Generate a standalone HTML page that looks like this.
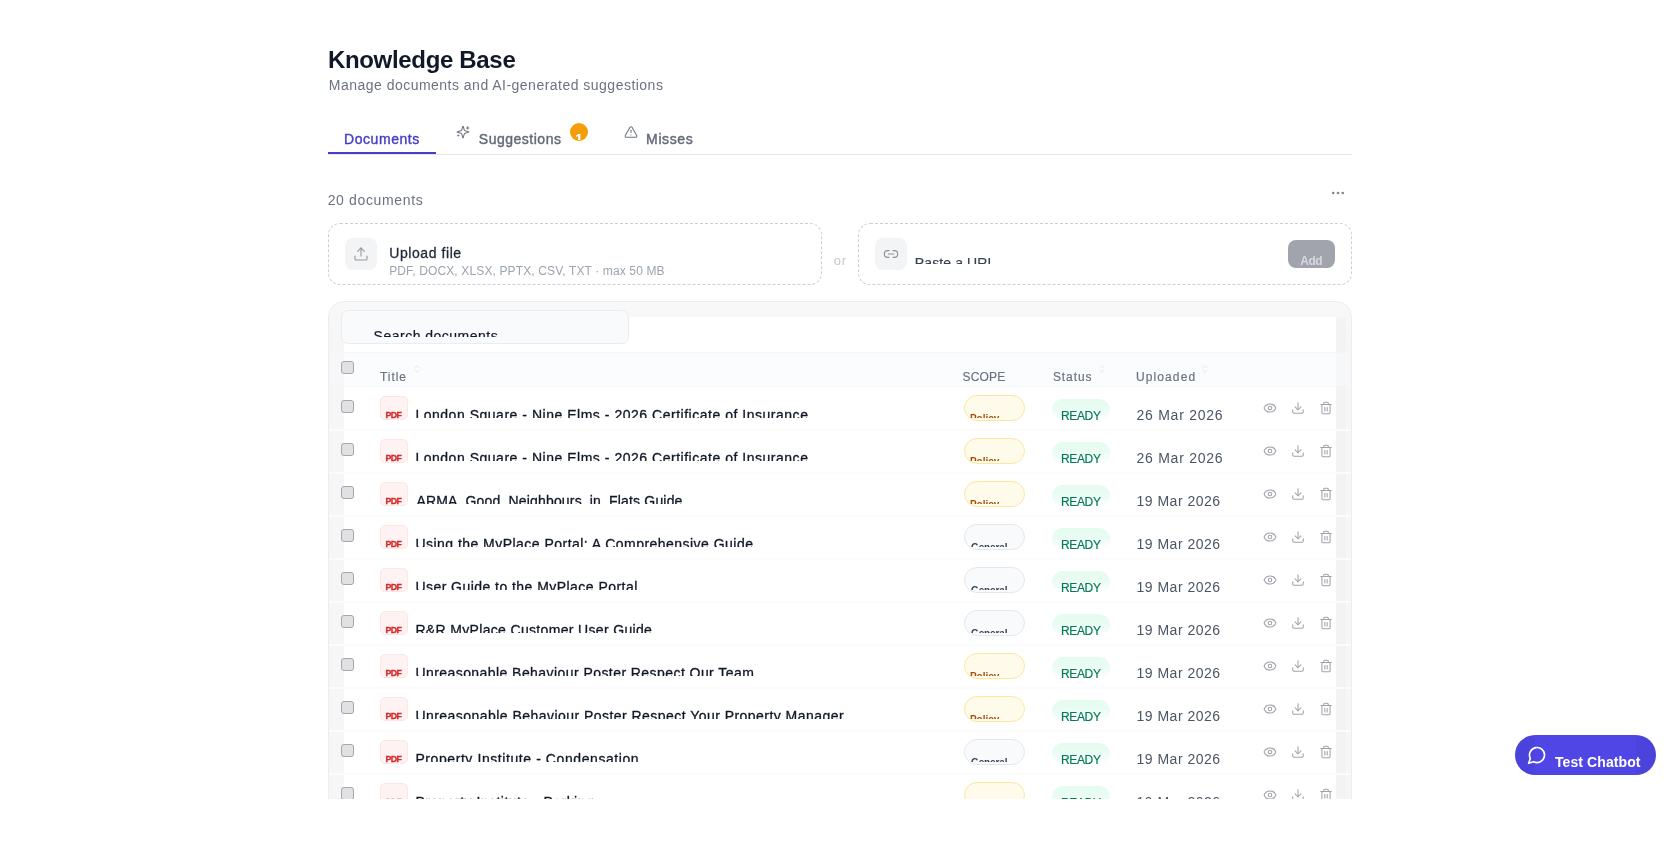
<!DOCTYPE html><html lang="en"><head><meta charset="utf-8"><title>Knowledge Base</title><style>
*{box-sizing:border-box;margin:0;padding:0}
html,body{width:1680px;height:855px;overflow:hidden;background:#fff}
body{font-family:"Liberation Sans",sans-serif;color:#111827;position:relative}
.a{position:absolute;white-space:nowrap}
.t{position:absolute;white-space:nowrap;line-height:1}
#page{position:absolute;left:0;top:0;width:1680px;height:799px;overflow:hidden;transform:translateZ(0)}
#fab{position:absolute;left:0;top:0;width:1680px;height:855px;transform:translateZ(0)}
svg{position:absolute;overflow:visible}
.ic{fill:none;stroke-linecap:round;stroke-linejoin:round}
.card{left:328px;top:301px;width:1024px;height:600px;background:linear-gradient(#f9f9fa 0,#f7f7f8 14px,#f6f6f7 40px);border:1px solid #ededef;border-radius:16px}
.inner{left:344px;top:317px;width:992px;height:600px;background:#fff}
.hdr{left:344px;top:352px;width:992px;height:34.5px;background:rgba(251,252,253,.996);border-top:1px solid #f4f5f7;border-bottom:1px solid #f5f6f8}
.sep{left:329px;width:1022px;height:2px;background:#fcfcfd}
.cb{width:13px;height:13px;border:1px solid #a6a6ab;background:#e1e1e3;border-radius:3px}
.pdf{left:380px;width:28px;height:23.5px;background:#fef2f2;border:1px solid #fde6e6;border-radius:5px;overflow:hidden}
.clip{overflow:hidden}
.pill{left:963.8px;width:61.7px;height:26px;border-radius:13px;overflow:hidden}
.pol{background:#fffbeb;border:1px solid #fbe7a1}
.gen{background:#f9fafb;border:1px solid #e5e7eb}
.rdy{left:1052px;width:58px;height:22px;border-radius:11px;background:linear-gradient(#e5fbf0 0,#e9fcf3 45%,#f5fef9 78%,#fff 100%)}
</style></head><body><div id="page">
<div class="t" style="left:327.90px;top:47.68px;font-size:24px;color:#111827;letter-spacing:-0.323px;font-weight:700">Knowledge Base</div>
<div class="t" style="left:328.80px;top:77.85px;font-size:14px;color:#6b7280;letter-spacing:0.482px">Manage documents and AI-generated suggestions</div>
<div class="a" style="left:328px;top:154px;width:1024px;height:1px;background:#e5e7eb"></div>
<div class="a" style="left:328px;top:152px;width:108px;height:2px;background:#463ec8"></div>
<div class="t" style="left:344.00px;top:131.95px;font-size:14px;color:#4740c6;letter-spacing:0.562px;-webkit-text-stroke:0.4px #4740c6">Documents</div>
<svg class="ic" style="left:456px;top:125px" width="14" height="14" viewBox="0 0 24 24" stroke="#6f7480" stroke-width="1.8"><path d="M9.94 15.5A2 2 0 0 0 8.5 14.06l-6.14-1.58a.5.5 0 0 1 0-.96L8.5 9.94A2 2 0 0 0 9.94 8.5l1.58-6.14a.5.5 0 0 1 .96 0L14.06 8.5A2 2 0 0 0 15.5 9.94l6.14 1.58a.5.5 0 0 1 0 .96L15.5 14.06a2 2 0 0 0-1.44 1.44l-1.58 6.14a.5.5 0 0 1-.96 0z"/><path d="M20 3v4"/><path d="M22 5h-4"/><path d="M4 17v2"/><path d="M5 18H3"/></svg>
<div class="t" style="left:478.80px;top:132.15px;font-size:14px;color:#646976;letter-spacing:0.510px;-webkit-text-stroke:0.42px #646976">Suggestions</div>
<div class="a" style="left:569.8px;top:123px;width:17.8px;height:17.6px;border-radius:9px;background:#f59e0b"></div><div class="a clip" style="left:570px;top:123px;width:18px;height:16.8px"><div class="t" style="left:5.20px;top:9.40px;font-size:13px;color:#fff;letter-spacing:0.000px;font-weight:700;-webkit-text-stroke:0.2px #fff">1</div></div>
<svg class="ic" style="left:623.6px;top:125px" width="14" height="14" viewBox="0 0 24 24" stroke="#6f7480" stroke-width="1.8"><path d="M21.73 18l-8-14a2 2 0 0 0-3.48 0l-8 14A2 2 0 0 0 4 21h16a2 2 0 0 0 1.73-3"/><path d="M12 9v4"/><path d="M12 17h.01"/></svg>
<div class="t" style="left:646.10px;top:132.15px;font-size:14px;color:#646976;letter-spacing:0.620px;-webkit-text-stroke:0.42px #646976">Misses</div>
<div class="t" style="left:327.70px;top:192.55px;font-size:14px;color:#6b7280;letter-spacing:0.645px">20 documents</div>
<svg style="left:1328px;top:188px" width="20" height="10" viewBox="0 0 20 10"><circle cx="5.2" cy="5" r="1.3" fill="#85858d"/><circle cx="10" cy="5" r="1.3" fill="#85858d"/><circle cx="14.75" cy="5" r="1.3" fill="#85858d"/></svg>
<div class="a" style="left:328px;top:223px;width:494px;height:62px;border:1px dashed #cdced3;border-radius:12px"></div>
<div class="a" style="left:345px;top:238px;width:32px;height:32px;border-radius:8px;background:#f3f4f6"></div>
<svg class="ic" style="left:353px;top:246px" width="16" height="16" viewBox="0 0 24 24" stroke="#9a9ba4" stroke-width="1.7"><path d="M21 15v4a2 2 0 0 1-2 2H5a2 2 0 0 1-2-2v-4"/><path d="M17 8l-5-5-5 5"/><path d="M12 3v12"/></svg>
<div class="t" style="left:389.20px;top:246.15px;font-size:14px;color:#1f2937;letter-spacing:0.580px;-webkit-text-stroke:0.3px #1f2937">Upload file</div>
<div class="t" style="left:389.20px;top:264.54px;font-size:12px;color:#9ca3af;letter-spacing:0.131px">PDF, DOCX, XLSX, PPTX, CSV, TXT · max 50 MB</div>
<div class="t" style="left:833.80px;top:254.00px;font-size:13px;color:#c6c8cd;letter-spacing:0.800px">or</div>
<div class="a" style="left:858px;top:223px;width:494px;height:62px;border:1px dashed #cdced3;border-radius:12px"></div>
<div class="a" style="left:875px;top:238px;width:32px;height:32px;border-radius:8px;background:#f3f4f6"></div>
<svg class="ic" style="left:883px;top:246px" width="16" height="16" viewBox="0 0 24 24" stroke="#8f9199" stroke-width="1.7"><path d="M9 17H7A5 5 0 0 1 7 7h2"/><path d="M15 7h2a5 5 0 1 1 0 10h-2"/><path d="M8 12h8"/></svg>
<div class="a clip" style="left:910px;top:250px;width:300px;height:14px"><div class="t" style="left:4.80px;top:5.85px;font-size:14px;color:#374151;letter-spacing:0.120px;-webkit-text-stroke:0.2px #374151">Paste a URL...</div></div>
<div class="a" style="left:1288px;top:240px;width:46.5px;height:28px;border-radius:8px;background:#a1a4ad"></div>
<div class="t" style="left:1300.20px;top:254.84px;font-size:12px;color:#d6d8de;letter-spacing:-0.450px;font-weight:700">Add</div>
<div class="a card"></div><div class="a" style="left:1336px;top:317px;width:10px;height:500px;background:#f3f3f4"></div><div class="a inner"></div>
<div class="a" style="left:341px;top:310px;width:288px;height:33.5px;border:1px solid #ebecef;border-radius:7px;background:#f9fafb"></div>
<div class="a clip" style="left:370px;top:320px;width:200px;height:17px"><div class="t" style="left:3.60px;top:8.95px;font-size:14px;color:#111827;letter-spacing:0.493px;-webkit-text-stroke:0.2px #111827">Search documents...</div></div>
<div class="a" style="left:329px;top:352.5px;width:1022px;height:33.5px;background:#f7f7f9"></div><div class="a hdr"></div>
<div class="a cb" style="left:341px;top:361px"></div>
<div class="t" style="left:380.00px;top:370.64px;font-size:12px;color:#6b7280;letter-spacing:0.950px;-webkit-text-stroke:0.18px #6b7280">Title</div>
<svg class="ic" style="left:411.5px;top:364px" width="10" height="10" viewBox="0 0 24 24" stroke="#e3e5e9" stroke-width="2.4"><path d="M7 15l5 5 5-5M7 9l5-5 5 5"/></svg>
<div class="t" style="left:962.50px;top:370.64px;font-size:12px;color:#6b7280;letter-spacing:0.200px;-webkit-text-stroke:0.18px #6b7280">SCOPE</div>
<div class="t" style="left:1052.90px;top:370.64px;font-size:12px;color:#6b7280;letter-spacing:0.920px;-webkit-text-stroke:0.18px #6b7280">Status</div>
<svg class="ic" style="left:1096.5px;top:364px" width="10" height="10" viewBox="0 0 24 24" stroke="#e3e5e9" stroke-width="2.4"><path d="M7 15l5 5 5-5M7 9l5-5 5 5"/></svg>
<div class="t" style="left:1136.00px;top:370.64px;font-size:12px;color:#6b7280;letter-spacing:1.100px;-webkit-text-stroke:0.18px #6b7280">Uploaded</div>
<svg class="ic" style="left:1199.5px;top:364px" width="10" height="10" viewBox="0 0 24 24" stroke="#e3e5e9" stroke-width="2.4"><path d="M7 15l5 5 5-5M7 9l5-5 5 5"/></svg>
<div class="a cb" style="left:341px;top:400.0px"></div>
<div class="a pdf" style="top:396.0px"><div class="t" style="left:4.40px;top:13.55px;font-size:8.8px;color:#d42a2a;letter-spacing:-0.500px;font-weight:700;-webkit-text-stroke:0.3px #d42a2a">PDF</div></div>
<div class="a clip" style="left:412px;top:401.5px;width:520px;height:16.4px"><div class="t" style="left:3.40px;top:6.25px;font-size:14px;color:#111827;letter-spacing:0.520px;-webkit-text-stroke:0.3px #111827">London Square - Nine Elms - 2026 Certificate of Insurance</div></div>
<div class="a pill pol" style="top:394.8px"><div class="a clip" style="left:0;top:0;width:60px;height:22.3px"><div class="t" style="left:5.20px;top:17.84px;font-size:10px;color:#a34e0c;letter-spacing:-0.040px;font-weight:700">Policy</div></div></div>
<div class="a rdy" style="top:399.0px"></div>
<div class="t" style="left:1061.00px;top:409.64px;font-size:12px;color:#047857;letter-spacing:-0.350px;-webkit-text-stroke:0.15px #047857">READY</div>
<div class="t" style="left:1136.50px;top:408.15px;font-size:14px;color:#4b5563;letter-spacing:0.750px">26 Mar 2026</div>
<svg class="ic" style="left:1263px;top:401.0px" width="14" height="14" viewBox="0 0 24 24" stroke="#a1a1aa" stroke-width="1.8"><path d="M2.06 12.35a1 1 0 0 1 0-.7 10.75 10.75 0 0 1 19.88 0 1 1 0 0 1 0 .7 10.75 10.75 0 0 1-19.88 0"/><circle cx="12" cy="12" r="3"/></svg>
<svg class="ic" style="left:1291px;top:401.0px" width="14" height="14" viewBox="0 0 24 24" stroke="#a1a1aa" stroke-width="1.8"><path d="M21 15v4a2 2 0 0 1-2 2H5a2 2 0 0 1-2-2v-4"/><path d="M7 10l5 5 5-5"/><path d="M12 15V3"/></svg>
<svg class="ic" style="left:1319px;top:401.0px" width="14" height="14" viewBox="0 0 24 24" stroke="#a1a1aa" stroke-width="1.8"><path d="M3 6h18"/><path d="M19 6v14a2 2 0 0 1-2 2H7a2 2 0 0 1-2-2V6"/><path d="M8 6V4a2 2 0 0 1 2-2h4a2 2 0 0 1 2 2v2"/><path d="M10 11v6"/><path d="M14 11v6"/></svg>
<div class="a sep" style="top:429.0px"></div>
<div class="a cb" style="left:341px;top:443.0px"></div>
<div class="a pdf" style="top:439.0px"><div class="t" style="left:4.40px;top:13.55px;font-size:8.8px;color:#d42a2a;letter-spacing:-0.500px;font-weight:700;-webkit-text-stroke:0.3px #d42a2a">PDF</div></div>
<div class="a clip" style="left:412px;top:444.5px;width:520px;height:16.4px"><div class="t" style="left:3.40px;top:6.25px;font-size:14px;color:#111827;letter-spacing:0.520px;-webkit-text-stroke:0.3px #111827">London Square - Nine Elms - 2026 Certificate of Insurance</div></div>
<div class="a pill pol" style="top:437.8px"><div class="a clip" style="left:0;top:0;width:60px;height:22.3px"><div class="t" style="left:5.20px;top:17.84px;font-size:10px;color:#a34e0c;letter-spacing:-0.040px;font-weight:700">Policy</div></div></div>
<div class="a rdy" style="top:442.0px"></div>
<div class="t" style="left:1061.00px;top:452.64px;font-size:12px;color:#047857;letter-spacing:-0.350px;-webkit-text-stroke:0.15px #047857">READY</div>
<div class="t" style="left:1136.50px;top:451.15px;font-size:14px;color:#4b5563;letter-spacing:0.750px">26 Mar 2026</div>
<svg class="ic" style="left:1263px;top:444.0px" width="14" height="14" viewBox="0 0 24 24" stroke="#a1a1aa" stroke-width="1.8"><path d="M2.06 12.35a1 1 0 0 1 0-.7 10.75 10.75 0 0 1 19.88 0 1 1 0 0 1 0 .7 10.75 10.75 0 0 1-19.88 0"/><circle cx="12" cy="12" r="3"/></svg>
<svg class="ic" style="left:1291px;top:444.0px" width="14" height="14" viewBox="0 0 24 24" stroke="#a1a1aa" stroke-width="1.8"><path d="M21 15v4a2 2 0 0 1-2 2H5a2 2 0 0 1-2-2v-4"/><path d="M7 10l5 5 5-5"/><path d="M12 15V3"/></svg>
<svg class="ic" style="left:1319px;top:444.0px" width="14" height="14" viewBox="0 0 24 24" stroke="#a1a1aa" stroke-width="1.8"><path d="M3 6h18"/><path d="M19 6v14a2 2 0 0 1-2 2H7a2 2 0 0 1-2-2V6"/><path d="M8 6V4a2 2 0 0 1 2-2h4a2 2 0 0 1 2 2v2"/><path d="M10 11v6"/><path d="M14 11v6"/></svg>
<div class="a sep" style="top:472.0px"></div>
<div class="a cb" style="left:341px;top:486.0px"></div>
<div class="a pdf" style="top:482.0px"><div class="t" style="left:4.40px;top:13.55px;font-size:8.8px;color:#d42a2a;letter-spacing:-0.500px;font-weight:700;-webkit-text-stroke:0.3px #d42a2a">PDF</div></div>
<div class="a clip" style="left:412px;top:487.5px;width:520px;height:16.4px"><div class="t" style="left:4.40px;top:6.25px;font-size:14px;color:#111827;letter-spacing:0.179px;-webkit-text-stroke:0.3px #111827">ARMA_Good_Neighbours_in_Flats Guide</div></div>
<div class="a pill pol" style="top:480.8px"><div class="a clip" style="left:0;top:0;width:60px;height:22.3px"><div class="t" style="left:5.20px;top:17.84px;font-size:10px;color:#a34e0c;letter-spacing:-0.040px;font-weight:700">Policy</div></div></div>
<div class="a rdy" style="top:485.0px"></div>
<div class="t" style="left:1061.00px;top:495.64px;font-size:12px;color:#047857;letter-spacing:-0.350px;-webkit-text-stroke:0.15px #047857">READY</div>
<div class="t" style="left:1136.50px;top:494.15px;font-size:14px;color:#4b5563;letter-spacing:0.500px">19 Mar 2026</div>
<svg class="ic" style="left:1263px;top:487.0px" width="14" height="14" viewBox="0 0 24 24" stroke="#a1a1aa" stroke-width="1.8"><path d="M2.06 12.35a1 1 0 0 1 0-.7 10.75 10.75 0 0 1 19.88 0 1 1 0 0 1 0 .7 10.75 10.75 0 0 1-19.88 0"/><circle cx="12" cy="12" r="3"/></svg>
<svg class="ic" style="left:1291px;top:487.0px" width="14" height="14" viewBox="0 0 24 24" stroke="#a1a1aa" stroke-width="1.8"><path d="M21 15v4a2 2 0 0 1-2 2H5a2 2 0 0 1-2-2v-4"/><path d="M7 10l5 5 5-5"/><path d="M12 15V3"/></svg>
<svg class="ic" style="left:1319px;top:487.0px" width="14" height="14" viewBox="0 0 24 24" stroke="#a1a1aa" stroke-width="1.8"><path d="M3 6h18"/><path d="M19 6v14a2 2 0 0 1-2 2H7a2 2 0 0 1-2-2V6"/><path d="M8 6V4a2 2 0 0 1 2-2h4a2 2 0 0 1 2 2v2"/><path d="M10 11v6"/><path d="M14 11v6"/></svg>
<div class="a sep" style="top:515.0px"></div>
<div class="a cb" style="left:341px;top:529.0px"></div>
<div class="a pdf" style="top:525.0px"><div class="t" style="left:4.40px;top:13.55px;font-size:8.8px;color:#d42a2a;letter-spacing:-0.500px;font-weight:700;-webkit-text-stroke:0.3px #d42a2a">PDF</div></div>
<div class="a clip" style="left:412px;top:530.5px;width:520px;height:16.4px"><div class="t" style="left:3.40px;top:6.25px;font-size:14px;color:#111827;letter-spacing:0.470px;-webkit-text-stroke:0.3px #111827">Using the MyPlace Portal: A Comprehensive Guide</div></div>
<div class="a pill gen" style="top:523.8px"><div class="a clip" style="left:0;top:0;width:60px;height:22.3px"><div class="t" style="left:6.20px;top:17.84px;font-size:10px;color:#374151;letter-spacing:-0.117px;font-weight:700">General</div></div></div>
<div class="a rdy" style="top:528.0px"></div>
<div class="t" style="left:1061.00px;top:538.64px;font-size:12px;color:#047857;letter-spacing:-0.350px;-webkit-text-stroke:0.15px #047857">READY</div>
<div class="t" style="left:1136.50px;top:537.15px;font-size:14px;color:#4b5563;letter-spacing:0.500px">19 Mar 2026</div>
<svg class="ic" style="left:1263px;top:530.0px" width="14" height="14" viewBox="0 0 24 24" stroke="#a1a1aa" stroke-width="1.8"><path d="M2.06 12.35a1 1 0 0 1 0-.7 10.75 10.75 0 0 1 19.88 0 1 1 0 0 1 0 .7 10.75 10.75 0 0 1-19.88 0"/><circle cx="12" cy="12" r="3"/></svg>
<svg class="ic" style="left:1291px;top:530.0px" width="14" height="14" viewBox="0 0 24 24" stroke="#a1a1aa" stroke-width="1.8"><path d="M21 15v4a2 2 0 0 1-2 2H5a2 2 0 0 1-2-2v-4"/><path d="M7 10l5 5 5-5"/><path d="M12 15V3"/></svg>
<svg class="ic" style="left:1319px;top:530.0px" width="14" height="14" viewBox="0 0 24 24" stroke="#a1a1aa" stroke-width="1.8"><path d="M3 6h18"/><path d="M19 6v14a2 2 0 0 1-2 2H7a2 2 0 0 1-2-2V6"/><path d="M8 6V4a2 2 0 0 1 2-2h4a2 2 0 0 1 2 2v2"/><path d="M10 11v6"/><path d="M14 11v6"/></svg>
<div class="a sep" style="top:558.0px"></div>
<div class="a cb" style="left:341px;top:572.0px"></div>
<div class="a pdf" style="top:568.0px"><div class="t" style="left:4.40px;top:13.55px;font-size:8.8px;color:#d42a2a;letter-spacing:-0.500px;font-weight:700;-webkit-text-stroke:0.3px #d42a2a">PDF</div></div>
<div class="a clip" style="left:412px;top:573.5px;width:520px;height:16.4px"><div class="t" style="left:3.40px;top:6.25px;font-size:14px;color:#111827;letter-spacing:0.455px;-webkit-text-stroke:0.3px #111827">User Guide to the MyPlace Portal</div></div>
<div class="a pill gen" style="top:566.8px"><div class="a clip" style="left:0;top:0;width:60px;height:22.3px"><div class="t" style="left:6.20px;top:17.84px;font-size:10px;color:#374151;letter-spacing:-0.117px;font-weight:700">General</div></div></div>
<div class="a rdy" style="top:571.0px"></div>
<div class="t" style="left:1061.00px;top:581.64px;font-size:12px;color:#047857;letter-spacing:-0.350px;-webkit-text-stroke:0.15px #047857">READY</div>
<div class="t" style="left:1136.50px;top:580.15px;font-size:14px;color:#4b5563;letter-spacing:0.500px">19 Mar 2026</div>
<svg class="ic" style="left:1263px;top:573.0px" width="14" height="14" viewBox="0 0 24 24" stroke="#a1a1aa" stroke-width="1.8"><path d="M2.06 12.35a1 1 0 0 1 0-.7 10.75 10.75 0 0 1 19.88 0 1 1 0 0 1 0 .7 10.75 10.75 0 0 1-19.88 0"/><circle cx="12" cy="12" r="3"/></svg>
<svg class="ic" style="left:1291px;top:573.0px" width="14" height="14" viewBox="0 0 24 24" stroke="#a1a1aa" stroke-width="1.8"><path d="M21 15v4a2 2 0 0 1-2 2H5a2 2 0 0 1-2-2v-4"/><path d="M7 10l5 5 5-5"/><path d="M12 15V3"/></svg>
<svg class="ic" style="left:1319px;top:573.0px" width="14" height="14" viewBox="0 0 24 24" stroke="#a1a1aa" stroke-width="1.8"><path d="M3 6h18"/><path d="M19 6v14a2 2 0 0 1-2 2H7a2 2 0 0 1-2-2V6"/><path d="M8 6V4a2 2 0 0 1 2-2h4a2 2 0 0 1 2 2v2"/><path d="M10 11v6"/><path d="M14 11v6"/></svg>
<div class="a sep" style="top:601.0px"></div>
<div class="a cb" style="left:341px;top:615.0px"></div>
<div class="a pdf" style="top:611.0px"><div class="t" style="left:4.40px;top:13.55px;font-size:8.8px;color:#d42a2a;letter-spacing:-0.500px;font-weight:700;-webkit-text-stroke:0.3px #d42a2a">PDF</div></div>
<div class="a clip" style="left:412px;top:616.5px;width:520px;height:16.4px"><div class="t" style="left:3.40px;top:6.25px;font-size:14px;color:#111827;letter-spacing:0.337px;-webkit-text-stroke:0.3px #111827">R&amp;R MyPlace Customer User Guide</div></div>
<div class="a pill gen" style="top:609.8px"><div class="a clip" style="left:0;top:0;width:60px;height:22.3px"><div class="t" style="left:6.20px;top:17.84px;font-size:10px;color:#374151;letter-spacing:-0.117px;font-weight:700">General</div></div></div>
<div class="a rdy" style="top:614.0px"></div>
<div class="t" style="left:1061.00px;top:624.64px;font-size:12px;color:#047857;letter-spacing:-0.350px;-webkit-text-stroke:0.15px #047857">READY</div>
<div class="t" style="left:1136.50px;top:623.15px;font-size:14px;color:#4b5563;letter-spacing:0.500px">19 Mar 2026</div>
<svg class="ic" style="left:1263px;top:616.0px" width="14" height="14" viewBox="0 0 24 24" stroke="#a1a1aa" stroke-width="1.8"><path d="M2.06 12.35a1 1 0 0 1 0-.7 10.75 10.75 0 0 1 19.88 0 1 1 0 0 1 0 .7 10.75 10.75 0 0 1-19.88 0"/><circle cx="12" cy="12" r="3"/></svg>
<svg class="ic" style="left:1291px;top:616.0px" width="14" height="14" viewBox="0 0 24 24" stroke="#a1a1aa" stroke-width="1.8"><path d="M21 15v4a2 2 0 0 1-2 2H5a2 2 0 0 1-2-2v-4"/><path d="M7 10l5 5 5-5"/><path d="M12 15V3"/></svg>
<svg class="ic" style="left:1319px;top:616.0px" width="14" height="14" viewBox="0 0 24 24" stroke="#a1a1aa" stroke-width="1.8"><path d="M3 6h18"/><path d="M19 6v14a2 2 0 0 1-2 2H7a2 2 0 0 1-2-2V6"/><path d="M8 6V4a2 2 0 0 1 2-2h4a2 2 0 0 1 2 2v2"/><path d="M10 11v6"/><path d="M14 11v6"/></svg>
<div class="a sep" style="top:644.0px"></div>
<div class="a cb" style="left:341px;top:658.0px"></div>
<div class="a pdf" style="top:654.0px"><div class="t" style="left:4.40px;top:13.55px;font-size:8.8px;color:#d42a2a;letter-spacing:-0.500px;font-weight:700;-webkit-text-stroke:0.3px #d42a2a">PDF</div></div>
<div class="a clip" style="left:412px;top:659.5px;width:520px;height:16.4px"><div class="t" style="left:3.40px;top:6.25px;font-size:14px;color:#111827;letter-spacing:0.436px;-webkit-text-stroke:0.3px #111827">Unreasonable Behaviour Poster Respect Our Team</div></div>
<div class="a pill pol" style="top:652.8px"><div class="a clip" style="left:0;top:0;width:60px;height:22.3px"><div class="t" style="left:5.20px;top:17.84px;font-size:10px;color:#a34e0c;letter-spacing:-0.040px;font-weight:700">Policy</div></div></div>
<div class="a rdy" style="top:657.0px"></div>
<div class="t" style="left:1061.00px;top:667.64px;font-size:12px;color:#047857;letter-spacing:-0.350px;-webkit-text-stroke:0.15px #047857">READY</div>
<div class="t" style="left:1136.50px;top:666.15px;font-size:14px;color:#4b5563;letter-spacing:0.500px">19 Mar 2026</div>
<svg class="ic" style="left:1263px;top:659.0px" width="14" height="14" viewBox="0 0 24 24" stroke="#a1a1aa" stroke-width="1.8"><path d="M2.06 12.35a1 1 0 0 1 0-.7 10.75 10.75 0 0 1 19.88 0 1 1 0 0 1 0 .7 10.75 10.75 0 0 1-19.88 0"/><circle cx="12" cy="12" r="3"/></svg>
<svg class="ic" style="left:1291px;top:659.0px" width="14" height="14" viewBox="0 0 24 24" stroke="#a1a1aa" stroke-width="1.8"><path d="M21 15v4a2 2 0 0 1-2 2H5a2 2 0 0 1-2-2v-4"/><path d="M7 10l5 5 5-5"/><path d="M12 15V3"/></svg>
<svg class="ic" style="left:1319px;top:659.0px" width="14" height="14" viewBox="0 0 24 24" stroke="#a1a1aa" stroke-width="1.8"><path d="M3 6h18"/><path d="M19 6v14a2 2 0 0 1-2 2H7a2 2 0 0 1-2-2V6"/><path d="M8 6V4a2 2 0 0 1 2-2h4a2 2 0 0 1 2 2v2"/><path d="M10 11v6"/><path d="M14 11v6"/></svg>
<div class="a sep" style="top:687.0px"></div>
<div class="a cb" style="left:341px;top:701.0px"></div>
<div class="a pdf" style="top:697.0px"><div class="t" style="left:4.40px;top:13.55px;font-size:8.8px;color:#d42a2a;letter-spacing:-0.500px;font-weight:700;-webkit-text-stroke:0.3px #d42a2a">PDF</div></div>
<div class="a clip" style="left:412px;top:702.5px;width:520px;height:16.4px"><div class="t" style="left:3.40px;top:6.25px;font-size:14px;color:#111827;letter-spacing:0.459px;-webkit-text-stroke:0.3px #111827">Unreasonable Behaviour Poster Respect Your Property Manager</div></div>
<div class="a pill pol" style="top:695.8px"><div class="a clip" style="left:0;top:0;width:60px;height:22.3px"><div class="t" style="left:5.20px;top:17.84px;font-size:10px;color:#a34e0c;letter-spacing:-0.040px;font-weight:700">Policy</div></div></div>
<div class="a rdy" style="top:700.0px"></div>
<div class="t" style="left:1061.00px;top:710.64px;font-size:12px;color:#047857;letter-spacing:-0.350px;-webkit-text-stroke:0.15px #047857">READY</div>
<div class="t" style="left:1136.50px;top:709.15px;font-size:14px;color:#4b5563;letter-spacing:0.500px">19 Mar 2026</div>
<svg class="ic" style="left:1263px;top:702.0px" width="14" height="14" viewBox="0 0 24 24" stroke="#a1a1aa" stroke-width="1.8"><path d="M2.06 12.35a1 1 0 0 1 0-.7 10.75 10.75 0 0 1 19.88 0 1 1 0 0 1 0 .7 10.75 10.75 0 0 1-19.88 0"/><circle cx="12" cy="12" r="3"/></svg>
<svg class="ic" style="left:1291px;top:702.0px" width="14" height="14" viewBox="0 0 24 24" stroke="#a1a1aa" stroke-width="1.8"><path d="M21 15v4a2 2 0 0 1-2 2H5a2 2 0 0 1-2-2v-4"/><path d="M7 10l5 5 5-5"/><path d="M12 15V3"/></svg>
<svg class="ic" style="left:1319px;top:702.0px" width="14" height="14" viewBox="0 0 24 24" stroke="#a1a1aa" stroke-width="1.8"><path d="M3 6h18"/><path d="M19 6v14a2 2 0 0 1-2 2H7a2 2 0 0 1-2-2V6"/><path d="M8 6V4a2 2 0 0 1 2-2h4a2 2 0 0 1 2 2v2"/><path d="M10 11v6"/><path d="M14 11v6"/></svg>
<div class="a sep" style="top:730.0px"></div>
<div class="a cb" style="left:341px;top:744.0px"></div>
<div class="a pdf" style="top:740.0px"><div class="t" style="left:4.40px;top:13.55px;font-size:8.8px;color:#d42a2a;letter-spacing:-0.500px;font-weight:700;-webkit-text-stroke:0.3px #d42a2a">PDF</div></div>
<div class="a clip" style="left:412px;top:745.5px;width:520px;height:16.4px"><div class="t" style="left:3.40px;top:6.25px;font-size:14px;color:#111827;letter-spacing:0.581px;-webkit-text-stroke:0.3px #111827">Property Institute - Condensation</div></div>
<div class="a pill gen" style="top:738.8px"><div class="a clip" style="left:0;top:0;width:60px;height:22.3px"><div class="t" style="left:6.20px;top:17.84px;font-size:10px;color:#374151;letter-spacing:-0.117px;font-weight:700">General</div></div></div>
<div class="a rdy" style="top:743.0px"></div>
<div class="t" style="left:1061.00px;top:753.64px;font-size:12px;color:#047857;letter-spacing:-0.350px;-webkit-text-stroke:0.15px #047857">READY</div>
<div class="t" style="left:1136.50px;top:752.15px;font-size:14px;color:#4b5563;letter-spacing:0.500px">19 Mar 2026</div>
<svg class="ic" style="left:1263px;top:745.0px" width="14" height="14" viewBox="0 0 24 24" stroke="#a1a1aa" stroke-width="1.8"><path d="M2.06 12.35a1 1 0 0 1 0-.7 10.75 10.75 0 0 1 19.88 0 1 1 0 0 1 0 .7 10.75 10.75 0 0 1-19.88 0"/><circle cx="12" cy="12" r="3"/></svg>
<svg class="ic" style="left:1291px;top:745.0px" width="14" height="14" viewBox="0 0 24 24" stroke="#a1a1aa" stroke-width="1.8"><path d="M21 15v4a2 2 0 0 1-2 2H5a2 2 0 0 1-2-2v-4"/><path d="M7 10l5 5 5-5"/><path d="M12 15V3"/></svg>
<svg class="ic" style="left:1319px;top:745.0px" width="14" height="14" viewBox="0 0 24 24" stroke="#a1a1aa" stroke-width="1.8"><path d="M3 6h18"/><path d="M19 6v14a2 2 0 0 1-2 2H7a2 2 0 0 1-2-2V6"/><path d="M8 6V4a2 2 0 0 1 2-2h4a2 2 0 0 1 2 2v2"/><path d="M10 11v6"/><path d="M14 11v6"/></svg>
<div class="a sep" style="top:773.0px"></div>
<div class="a cb" style="left:341px;top:787.0px"></div>
<div class="a pdf" style="top:783.0px"><div class="t" style="left:4.40px;top:13.55px;font-size:8.8px;color:#d42a2a;letter-spacing:-0.500px;font-weight:700;-webkit-text-stroke:0.3px #d42a2a">PDF</div></div>
<div class="a clip" style="left:412px;top:788.5px;width:520px;height:16.4px"><div class="t" style="left:3.40px;top:6.25px;font-size:14px;color:#111827;letter-spacing:0.467px;-webkit-text-stroke:0.3px #111827">Property Institute - Parking</div></div>
<div class="a pill pol" style="top:781.8px"><div class="a clip" style="left:0;top:0;width:60px;height:22.3px"><div class="t" style="left:5.20px;top:17.84px;font-size:10px;color:#a34e0c;letter-spacing:-0.040px;font-weight:700">Policy</div></div></div>
<div class="a rdy" style="top:786.0px"></div>
<div class="t" style="left:1061.00px;top:796.64px;font-size:12px;color:#047857;letter-spacing:-0.350px;-webkit-text-stroke:0.15px #047857">READY</div>
<div class="t" style="left:1136.50px;top:795.15px;font-size:14px;color:#4b5563;letter-spacing:0.500px">19 Mar 2026</div>
<svg class="ic" style="left:1263px;top:788.0px" width="14" height="14" viewBox="0 0 24 24" stroke="#a1a1aa" stroke-width="1.8"><path d="M2.06 12.35a1 1 0 0 1 0-.7 10.75 10.75 0 0 1 19.88 0 1 1 0 0 1 0 .7 10.75 10.75 0 0 1-19.88 0"/><circle cx="12" cy="12" r="3"/></svg>
<svg class="ic" style="left:1291px;top:788.0px" width="14" height="14" viewBox="0 0 24 24" stroke="#a1a1aa" stroke-width="1.8"><path d="M21 15v4a2 2 0 0 1-2 2H5a2 2 0 0 1-2-2v-4"/><path d="M7 10l5 5 5-5"/><path d="M12 15V3"/></svg>
<svg class="ic" style="left:1319px;top:788.0px" width="14" height="14" viewBox="0 0 24 24" stroke="#a1a1aa" stroke-width="1.8"><path d="M3 6h18"/><path d="M19 6v14a2 2 0 0 1-2 2H7a2 2 0 0 1-2-2V6"/><path d="M8 6V4a2 2 0 0 1 2-2h4a2 2 0 0 1 2 2v2"/><path d="M10 11v6"/><path d="M14 11v6"/></svg>
</div><div id="fab">
<div class="a" style="left:1514.5px;top:735px;width:141.5px;height:40px;border-radius:20px;background:linear-gradient(90deg,#4a42da 0,#4b43dc 13.6%,#4f46e5 14.2%,#4f46e5 85.8%,#4b43dc 86.4%,#4a42da 100%)"></div>
<svg class="ic" style="left:1526.5px;top:745.1px" width="20" height="20" viewBox="0 0 24 24" stroke="#fff" stroke-width="2"><path d="M7.9 20A9 9 0 1 0 4 16.1L2 22z"/></svg>
<div class="t" style="left:1555.00px;top:755.15px;font-size:14px;color:#fff;letter-spacing:0.091px;font-weight:700">Test Chatbot</div>
</div></body></html>
